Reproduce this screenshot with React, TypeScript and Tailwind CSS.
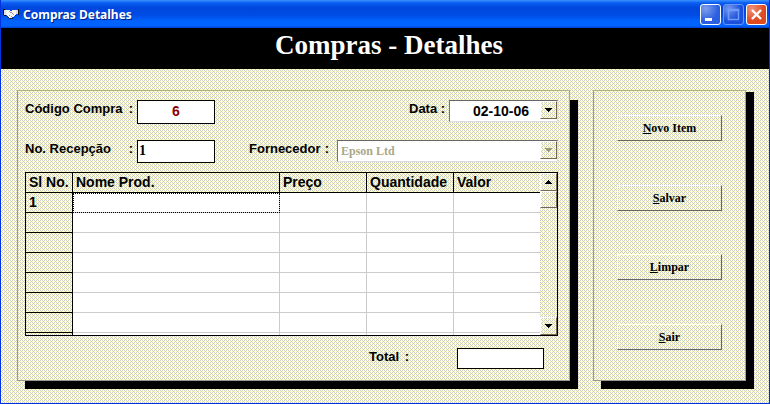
import type { ReactNode } from "react";

// Cream / grey / white checker, fixed so nested surfaces stay in step with each other
const DITHER =
  "bg-fixed bg-[conic-gradient(at_1px_1px,transparent_75%,#ffc_0),conic-gradient(at_1px_1px,transparent_75%,#ffc_0),conic-gradient(#ccc_25%,#ffc_0_50%,#ccc_0_75%,#fff_0)] [background-size:4px_4px,4px_4px,2px_2px] [background-position:1px_1px,3px_3px,1px_0]";

const SANS = "font-['Liberation_Sans',Arial,sans-serif]";
const SERIF = "font-['Liberation_Serif','Times_New_Roman',serif]";

const COLUMNS = [
  { label: "Sl No.", width: "w-[47px]" },
  { label: "Nome Prod.", width: "" },
  { label: "Preço", width: "w-[87px]" },
  { label: "Quantidade", width: "w-[87px]" },
  { label: "Valor", width: "w-[86px]" },
];

const ROWS = ["1", "", "", "", "", "", "", ""];

const ACTIONS = [
  { key: "N", rest: "ovo Item" },
  { key: "S", rest: "alvar" },
  { key: "L", rest: "impar" },
  { key: "S", rest: "air" },
];

export default function App() {
  return (
    <div className={`border border-t-0 border-[#0033dd] text-black ${SANS} ${DITHER}`}>
      <TitleBar />
      <h1
        className={`h-[41px] bg-black pl-2 text-center text-[27px] leading-[34px] font-bold text-white ${SERIF}`}
      >
        Compras - Detalhes
      </h1>
      <main className="flex gap-[23px] pt-[21px] pr-[23px] pb-[22px] pl-4">
        <Panel className="flex-1" shadow="top-[10px]">
          <PurchaseForm />
        </Panel>
        <Panel className="w-[153px]" shadow="top-[2px]">
          <div className="flex h-full flex-col justify-between px-[23px] pt-6 pb-[30px]">
            {ACTIONS.map(({ key, rest }) => (
              <button
                key={rest}
                type="button"
                className={`h-[26px] border border-t-white border-r-[#666] border-b-[#666] border-l-white text-[12px] leading-4 font-bold ${SERIF}`}
              >
                <span className="underline">{key}</span>
                {rest}
              </button>
            ))}
          </div>
        </Panel>
      </main>
    </div>
  );
}

function TitleBar() {
  return (
    <header className="flex h-7 items-center bg-[linear-gradient(#3b93ff_0,#0a5cf0_3px,#0047dc_8px,#004ce4_15px,#0062ff_21px,#0062ff_26px,#003cc8_28px)] pr-0.5 pl-0.5">
      <HandshakeIcon />
      <span className="ml-1 flex-1 pt-0.5 font-['Noto_Sans',sans-serif] text-[12px] leading-4 font-bold text-white [text-shadow:1px_1px_#00208a]">
        Compras Detalhes
      </span>
      <div className="flex gap-0.5 pt-px">
        <CaptionButton label="Minimizar" className="border-white bg-[#2a5fe0]">
          <path d="M4 13h7v3H4z" fill="#fff" />
        </CaptionButton>
        <CaptionButton label="Maximizar" className="border-[#6699ff] bg-[#1a50dc]" disabled>
          <path d="M4.5 4.5h10v10h-10zM4 5.5h11" fill="none" stroke="#6f9bff" strokeWidth="1.5" />
        </CaptionButton>
        <CaptionButton label="Fechar" className="border-white bg-[#e04a20]">
          <path d="M5 5l9 9M14 5l-9 9" stroke="#fff" strokeWidth="2.4" />
        </CaptionButton>
      </div>
    </header>
  );
}

function CaptionButton({
  label,
  className,
  disabled,
  children,
}: {
  label: string;
  className: string;
  disabled?: boolean;
  children: ReactNode;
}) {
  return (
    <button
      type="button"
      aria-label={label}
      disabled={disabled}
      className={`size-[21px] rounded-[3px] border bg-[radial-gradient(circle_at_25%_20%,#ffffff66,transparent_60%)] ${className}`}
    >
      <svg viewBox="0 0 19 19" className="size-[19px]" aria-hidden="true">
        {children}
      </svg>
    </button>
  );
}

function HandshakeIcon() {
  return (
    <svg viewBox="0 0 16 10" className="h-[10px] w-4" shapeRendering="crispEdges" aria-hidden="true">
      <path d="M0 0h2v1H0zM0 1h1v5H0zM15 0h1v6h-1zM1 6h2v1H1z" fill="#111" />
      <path d="M1 1h3v5H1zM13 1h2v4h-2z" fill="#ddd" />
      <path d="M3 1h4v1h2V1h4v5h-1v1h-1v1h-2v1H6V8H5V7H4V6H3z" fill="#f4f4f0" />
      <path d="M6 2h1v1H6zM7 3h2v1H7zM9 4h1v1H9zM10 5h1v1h-1zM6 6h1v1H6zM8 7h1v1H8z" fill="#999" />
      <path d="M4 7h1v1H4zM5 8h1v1H5zM6 9h4v1H6zM10 8h1v1h-1zM12 6h1v1h-1z" fill="#222" />
    </svg>
  );
}

// Thin frame with a hard black shadow behind it
function Panel({
  className,
  shadow,
  children,
}: {
  className: string;
  shadow: string;
  children: ReactNode;
}) {
  return (
    <section className={`relative ${className}`}>
      <div className={`absolute -right-2 -bottom-2 left-2 bg-black ${shadow}`} />
      <div
        className={`relative h-full border border-t-[#b0b088] border-r-[#a8a888] border-b-[#999] border-l-[#999] ${DITHER}`}
      >
        {children}
      </div>
    </section>
  );
}

function PurchaseForm() {
  return (
    <form className="pt-[9px] pr-[11px] pb-[11px] pl-[7px] text-[13px] leading-[18px] font-bold">
      <div className="flex h-6 items-start">
        <Label htmlFor="codigo" className="w-[108px]">
          Código Compra
        </Label>
        <input
          id="codigo"
          defaultValue="6"
          className="ml-1 h-6 w-[78px] border border-black bg-white pb-0.5 text-center text-[14px] text-[#8b0000]"
        />
        <Label htmlFor="data" className="ml-auto w-9">
          Data
        </Label>
        <Combo id="data" value="02-10-06" className="w-[109px]" textClass="pl-[23px] text-[14px]" />
      </div>
      <div className="mt-4 flex h-6 items-start">
        <Label htmlFor="recepcao" className="w-[108px]">
          No. Recepção
        </Label>
        <input
          id="recepcao"
          defaultValue="1"
          className={`ml-1 h-[23px] w-[78px] border border-black bg-white px-px pb-0.5 text-[14px] ${SERIF}`}
        />
        <Label htmlFor="fornecedor" className="mr-1 ml-auto w-20">
          Fornecedor
        </Label>
        <Combo
          id="fornecedor"
          value="Epson Ltd"
          disabled
          className="w-[221px]"
          textClass={`pl-[3px] text-[12px] ${SERIF}`}
        />
      </div>
      <ItemsGrid />
      <div className="mt-3 flex items-start justify-end pr-[14px]">
        <Label htmlFor="total" className="mr-12 w-10">
          Total
        </Label>
        <input id="total" className="h-[21px] w-[87px] border border-black bg-white px-1" />
      </div>
    </form>
  );
}

function Label({
  htmlFor,
  className,
  children,
}: {
  htmlFor: string;
  className: string;
  children: ReactNode;
}) {
  return (
    <label htmlFor={htmlFor} className={`flex shrink-0 justify-between whitespace-nowrap ${className}`}>
      {children}
      <span>:</span>
    </label>
  );
}

function Combo({
  id,
  value,
  disabled,
  className,
  textClass,
}: {
  id: string;
  value: string;
  disabled?: boolean;
  className: string;
  textClass: string;
}) {
  return (
    <div className={`relative ml-1 ${className}`}>
      <select
        id={id}
        disabled={disabled}
        className={`block h-[22px] w-full appearance-none border border-t-[#666] border-r-[#ddd] border-b-[#ddd] border-l-[#996666] bg-white font-bold disabled:text-[#aaa888] disabled:opacity-100 ${textClass}`}
      >
        <option>{value}</option>
      </select>
      <span className="pointer-events-none absolute top-px right-px">
        <Arrow dim={disabled} />
      </span>
    </div>
  );
}

function Arrow({ up, dim }: { up?: boolean; dim?: boolean }) {
  return (
    <span
      className={`flex h-[18px] w-[17px] items-center justify-center border border-t-white border-r-[#776655] border-b-[#776655] border-l-white ${DITHER}`}
    >
      <svg viewBox="0 0 7 4" className="h-1 w-[7px]" shapeRendering="crispEdges" aria-hidden="true">
        <path
          d={up ? "M3 0h1v1h1v1h1v1h1v1H0V3h1V2h1V1h1z" : "M0 0h7v1H6v1H5v1H4v1H3V3H2V2H1V1H0z"}
          fill={dim ? "#999977" : "#000"}
        />
      </svg>
    </span>
  );
}

function ItemsGrid() {
  return (
    <div className="mt-2 flex h-[164px] overflow-hidden border border-black bg-white">
      <div className="flex-1 overflow-hidden">
        <table className="w-full table-fixed border-separate border-spacing-0 text-left text-[14px] leading-[19px]">
          <thead>
            <tr>
              {COLUMNS.map((col) => (
                <th
                  key={col.label}
                  className={`h-5 border-r border-b border-black p-0 pl-[3px] font-bold whitespace-nowrap last:border-r-0 ${col.width} ${DITHER}`}
                >
                  {col.label}
                </th>
              ))}
            </tr>
          </thead>
          <tbody>
            {ROWS.map((num, i) => (
              <tr key={i}>
                <th className={`h-5 border-r border-b border-black p-0 pl-[3px] ${DITHER}`}>{num}</th>
                {COLUMNS.slice(1).map((col, j) => (
                  <td
                    key={col.label}
                    className={`h-5 border-r border-b border-[#ccc] p-0 last:border-r-0 ${
                      i === 0 && j === 0 ? "outline-1 -outline-offset-1 outline-black outline-dotted" : ""
                    }`}
                  />
                ))}
              </tr>
            ))}
          </tbody>
        </table>
      </div>
      <div className={`flex w-[17px] flex-col ${DITHER}`}>
        <Arrow up />
        <span className="h-[17px] border border-t-white border-r-[#776655] border-b-[#776655] border-l-white" />
        <span className="mt-auto">
          <Arrow />
        </span>
      </div>
    </div>
  );
}
